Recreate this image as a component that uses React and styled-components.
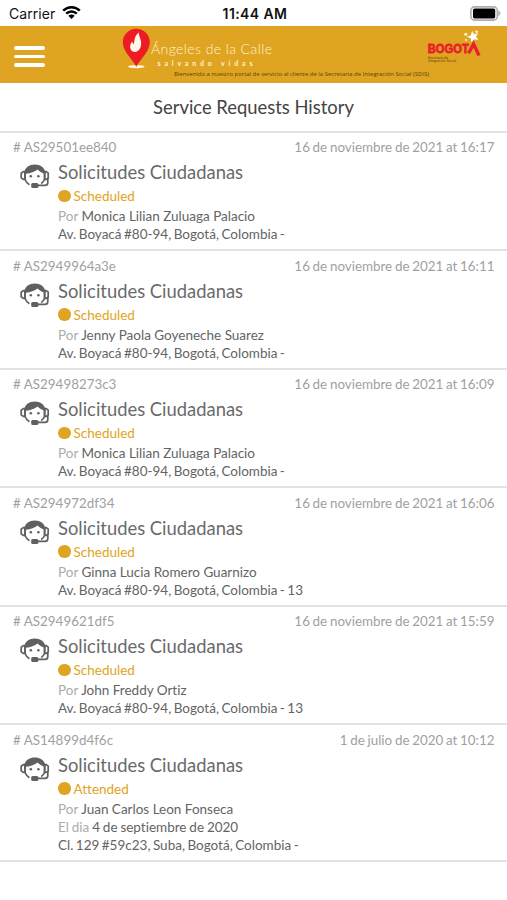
import styled, { createGlobalStyle } from "styled-components";

const requests = [
  {
    id: "AS29501ee840",
    date: "16 de noviembre de 2021 at 16:17",
    status: "Scheduled",
    person: "Monica Lilian Zuluaga Palacio",
    address: "Av. Boyacá #80-94, Bogotá, Colombia -",
  },
  {
    id: "AS2949964a3e",
    date: "16 de noviembre de 2021 at 16:11",
    status: "Scheduled",
    person: "Jenny Paola Goyeneche Suarez",
    address: "Av. Boyacá #80-94, Bogotá, Colombia -",
  },
  {
    id: "AS29498273c3",
    date: "16 de noviembre de 2021 at 16:09",
    status: "Scheduled",
    person: "Monica Lilian Zuluaga Palacio",
    address: "Av. Boyacá #80-94, Bogotá, Colombia -",
  },
  {
    id: "AS294972df34",
    date: "16 de noviembre de 2021 at 16:06",
    status: "Scheduled",
    person: "Ginna Lucia Romero Guarnizo",
    address: "Av. Boyacá #80-94, Bogotá, Colombia - 13",
  },
  {
    id: "AS2949621df5",
    date: "16 de noviembre de 2021 at 15:59",
    status: "Scheduled",
    person: "John Freddy Ortiz",
    address: "Av. Boyacá #80-94, Bogotá, Colombia - 13",
  },
  {
    id: "AS14899d4f6c",
    date: "1 de julio de 2020 at 10:12",
    status: "Attended",
    person: "Juan Carlos Leon Fonseca",
    day: "4 de septiembre de 2020",
    address: "Cl. 129 #59c23, Suba, Bogotá, Colombia -",
  },
];

const WifiIcon = () => (
  <svg width="19" height="15" viewBox="0 0 19 15">
    <g fill="none" stroke="#000" strokeWidth="2.5">
      <path d="M1.2 5.6C5.9 1 13.1 1 17.8 5.6" />
      <path d="M4.2 8.7C7.2 5.8 11.8 5.8 14.8 8.7" />
    </g>
    <path d="M9.5 14L6.3 10.8C8.1 9.2 10.9 9.2 12.7 10.8Z" />
  </svg>
);

const BatteryIcon = () => (
  <svg width="31" height="15" viewBox="0 0 31 15">
    <rect x="0.9" y="0.9" width="26.4" height="13.2" rx="3.6" fill="#fff" stroke="#adadad" strokeWidth="1.6" />
    <rect x="3" y="2.6" width="22.2" height="9.8" rx="1.6" />
    <path d="M28.4 4.6C31 5.8 31 9 28.4 10.2Z" fill="#adadad" />
  </svg>
);

const AgentIcon = () => (
  <svg width="30" height="27" viewBox="0 0 30 27">
    <g fill="none" stroke="#606060" strokeWidth="1.7">
      <path d="M5 8V15.5C6 17.8 7.4 19.6 9.4 20.8" />
      <path d="M24.6 8V15.5C23.8 17.2 22.6 18.6 21.2 19.6" />
      <path d="M5 7.6H3.4L1.2 9.2V13.8L3.4 15.4H5Z" />
      <path d="M24.6 7.6H26.2L28.2 9.2V13.8L26.2 15.4H24.6Z" />
      <path d="M27.8 14V18.4Q27.8 21.4 24.8 21.4H18" />
    </g>
    <path
      d="M4.2 8.4C5.2 3.2 9.2 0.4 14.8 0.4S24.4 3.2 25.4 8.4V10C22.4 9.2 19.6 7.8 17.6 5.6C14.8 8 10.6 9.4 6 9.8L4.2 10.6Z"
      fill="#606060"
    />
    <circle cx="10.8" cy="12.2" r="1.25" fill="#606060" />
    <circle cx="18.4" cy="12.2" r="1.25" fill="#606060" />
    <rect x="11.2" y="19" width="7.2" height="5" rx="1.5" fill="#606060" />
  </svg>
);

const AngelesLogo = () => (
  <svg width="152" height="42" viewBox="0 0 152 42">
    <ellipse cx="14.3" cy="38.6" rx="8.3" ry="1.7" fill="#fff6dc" />
    <path d="M14.3 38.8C9.5 30 0.8 23.6 0.8 14A13.5 13.2 0 0 1 27.8 14C27.8 23.6 19 30 14.3 38.8Z" fill="#ed1c24" />
    <path
      d="M16.7 4.4C17 9.4 20.4 12.6 18.8 18.2C17.8 22.4 14.2 25 10.8 23.6C7.4 21.7 7.3 16.9 10.2 13.6C10.6 15 11 15.8 11.8 16.2C12.9 11.4 12.2 8.2 16.7 4.4Z"
      fill="#fff8ea"
    />
    <BrandText x="29" y="26" fontSize="14" textLength="121">
      Ángeles de la Calle
    </BrandText>
    <BrandText x="35.5" y="37.6" fontSize="7" fontWeight="700" textLength="95">
      salvando vidas
    </BrandText>
  </svg>
);

const BogotaLogo = () => (
  <svg width="56" height="34" viewBox="0 0 56 34">
    <BogotaText x="0.8" y="22.8" textLength="41" lengthAdjust="spacingAndGlyphs">
      BOGOT
    </BogotaText>
    <path d="M41.6 23.2L46.6 14L52 25.4" fill="none" stroke="#e8222b" strokeWidth="3.4" />
    <path d="M45.1 1L47.1 4.3L51.2 3.2L49 6.7L51.4 10.1L47.2 9.3L44.2 12L43.8 8.2L39.9 7L43.8 5.2Z" fill="#fff" />
    <circle cx="38.8" cy="4.2" r="1.5" fill="#fff5dd" />
    <circle cx="49.5" cy="1.7" r="1.3" fill="#fff5dd" />
    <circle cx="39" cy="10" r="1" fill="#fff5dd" />
    <SmallText x="1" y="28.6" textLength="20">
      Secretaría de
    </SmallText>
    <SmallText x="1" y="32.2" textLength="28">
      Integración Social
    </SmallText>
  </svg>
);

const Request = ({ request }) => (
  <Item>
    <Meta>
      <span># {request.id}</span>
      <RequestDate>{request.date}</RequestDate>
    </Meta>
    <Body>
      <AgentIcon />
      <div>
        <Service>Solicitudes Ciudadanas</Service>
        <Status>
          <Dot />
          {request.status}
        </Status>
        <Line>
          <Label>Por</Label> {request.person}
        </Line>
        {request.day && (
          <Line $spacing="-0.6px">
            <Label>El dia</Label> {request.day}
          </Line>
        )}
        <Line $spacing="-1px">{request.address}</Line>
      </div>
    </Body>
  </Item>
);

const App = () => {
  return (
    <Screen>
      <GlobalStyle />
      <StatusBar>
        <Carrier>
          Carrier
          <WifiIcon />
        </Carrier>
        <Clock>11:44 AM</Clock>
        <Battery>
          <BatteryIcon />
        </Battery>
      </StatusBar>
      <Header>
        <MenuButton aria-label="Menu">
          <Bar />
          <Bar />
          <Bar />
        </MenuButton>
        <Brand>
          <AngelesLogo />
          <Welcome width="258" height="10" viewBox="0 0 258 10">
            <WelcomeText x="1" y="6.4" textLength="255" lengthAdjust="spacingAndGlyphs">
              Bienvenido a nuestro portal de servicio al cliente de la Secretaria de Integración Social (SDIS)
            </WelcomeText>
          </Welcome>
        </Brand>
        <BogotaLogo />
      </Header>
      <Title>Service Requests History</Title>
      <main>
        {requests.map(request => (
          <Request key={request.id} request={request} />
        ))}
      </main>
    </Screen>
  );
};

export default App;

const GlobalStyle = createGlobalStyle`
  * {
    box-sizing: border-box;
  }
  body {
    margin: 0;
    background-color: #fff;
  }
  svg {
    display: block;
    flex-shrink: 0;
  }
`;

const Screen = styled.div`
  width: 507px;
  height: 900px;
  overflow: hidden;
  background-color: #fff;
  font-family: Lato, sans-serif;
  font-variant-ligatures: none;
`;

const StatusBar = styled.div`
  display: grid;
  grid-template-columns: 1fr auto 1fr;
  align-items: center;
  height: 25.5px;
  padding: 2px 6px 0 9px;
  font-family: Inter, sans-serif;
  font-size: 14px;
  color: #111;
`;

const Carrier = styled.div`
  display: flex;
  align-items: center;
  gap: 7px;
  letter-spacing: 0.05px;
  svg {
    margin-top: -3px;
  }
`;

const Clock = styled.div`
  font-weight: 600;
  letter-spacing: 0.4px;
`;

const Battery = styled.div`
  display: flex;
  justify-content: flex-end;
  margin-top: -1px;
`;

const Header = styled.header`
  display: flex;
  align-items: flex-start;
  height: 57px;
  padding: 0 24px 0 14px;
  background-color: #dfa421;
  > svg {
    margin-top: 4px;
  }
`;

const MenuButton = styled.button`
  display: flex;
  flex-direction: column;
  gap: 5px;
  width: 31px;
  margin: 20.5px 77px 0 0;
  padding: 0;
  border: none;
  background: none;
`;

const Bar = styled.span`
  height: 3.6px;
  border-radius: 2px;
  background-color: #fff;
`;

const Brand = styled.div`
  width: 305px;
  padding-top: 2px;
`;

const BrandText = styled.text`
  font-family: Lato, sans-serif;
  font-weight: ${props => props.fontWeight || 300};
  fill: #fff3d0;
`;

const Welcome = styled.svg`
  margin-left: 51px;
`;

const WelcomeText = styled.text`
  font-family: "Open Sans", sans-serif;
  font-size: 5.8px;
  fill: #5c4210;
`;

const BogotaText = styled.text`
  font-family: "Liberation Sans", sans-serif;
  font-size: 12.4px;
  font-weight: 700;
  fill: #e8222b;
  stroke: #e8222b;
  stroke-width: 0.8px;
`;

const SmallText = styled.text`
  font-family: "Liberation Sans", sans-serif;
  font-size: 3.3px;
  fill: #5f420d;
`;

const Title = styled.h1`
  height: 50.5px;
  margin: 0;
  border-bottom: 2px solid #e3e3e3;
  font-size: 18.4px;
  font-weight: 400;
  line-height: 48px;
  text-align: center;
  color: #444;
`;

const Item = styled.article`
  padding: 5.1px 12.5px 5.8px 13px;
  border-bottom: 2px solid #e3e3e3;
`;

const Meta = styled.div`
  display: flex;
  justify-content: space-between;
  font-size: 13.4px;
  line-height: 19px;
  color: #9f9f9f;
`;

const RequestDate = styled.span`
  word-spacing: -0.7px;
`;

const Body = styled.div`
  display: flex;
  gap: 8px;
  padding-left: 7px;
  > svg {
    margin-top: 7px;
  }
`;

const Service = styled.h2`
  margin: 2px 0 0;
  font-size: 18.4px;
  font-weight: 400;
  line-height: 27px;
  color: #6a6a6a;
`;

const Status = styled.div`
  display: flex;
  align-items: center;
  gap: 3px;
  margin-bottom: 1px;
  font-size: 13.5px;
  line-height: 20px;
  color: #dfa421;
`;

const Dot = styled.span`
  width: 12.5px;
  height: 12.5px;
  border-radius: 50%;
  background-color: #dfa421;
`;

const Line = styled.div`
  font-size: 13.5px;
  line-height: 18.3px;
  word-spacing: ${props => props.$spacing || "0"};
  color: #646464;
`;

const Label = styled.span`
  color: #acacac;
`;
